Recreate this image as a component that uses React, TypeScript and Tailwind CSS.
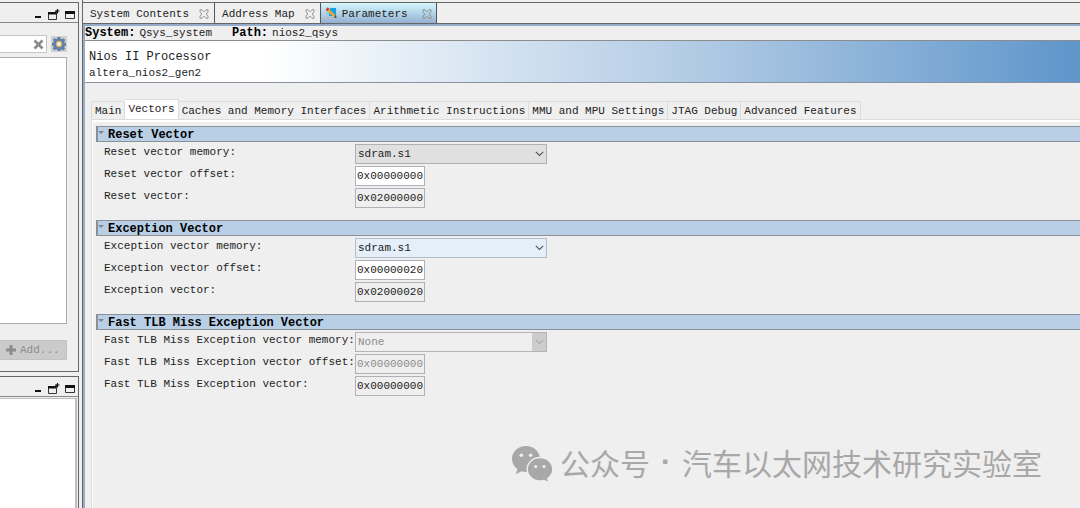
import { useState } from "react";
import type { ReactNode } from "react";
import clsx from "clsx";

type Field = {
  id: string;
  label: string;
  value: string;
  kind: "select" | "text";
  tone?: "hover" | "readonly" | "disabled";
};

const SECTIONS: { title: string; fields: Field[] }[] = [
  {
    title: "Reset Vector",
    fields: [
      { id: "reset-memory", label: "Reset vector memory:", value: "sdram.s1", kind: "select" },
      { id: "reset-offset", label: "Reset vector offset:", value: "0x00000000", kind: "text" },
      { id: "reset-vector", label: "Reset vector:", value: "0x02000000", kind: "text", tone: "readonly" },
    ],
  },
  {
    title: "Exception Vector",
    fields: [
      { id: "exc-memory", label: "Exception vector memory:", value: "sdram.s1", kind: "select", tone: "hover" },
      { id: "exc-offset", label: "Exception vector offset:", value: "0x00000020", kind: "text" },
      { id: "exc-vector", label: "Exception vector:", value: "0x02000020", kind: "text", tone: "readonly" },
    ],
  },
  {
    title: "Fast TLB Miss Exception Vector",
    fields: [
      { id: "tlb-memory", label: "Fast TLB Miss Exception vector memory:", value: "None", kind: "select", tone: "disabled" },
      { id: "tlb-offset", label: "Fast TLB Miss Exception vector offset:", value: "0x00000000", kind: "text", tone: "disabled" },
      { id: "tlb-vector", label: "Fast TLB Miss Exception vector:", value: "0x00000000", kind: "text", tone: "readonly" },
    ],
  },
];

const PARAM_TABS = [
  "Main",
  "Vectors",
  "Caches and Memory Interfaces",
  "Arithmetic Instructions",
  "MMU and MPU Settings",
  "JTAG Debug",
  "Advanced Features",
];

function CloseIcon() {
  return (
    <svg width="10" height="10" viewBox="0 0 10 10" fill="none" stroke="#8a8a8a" strokeWidth="0.9">
      <path d="M1 .8h2L5 2.800 7 .8h2v2L7.200 5 9 7.200v2H7L5 7.200 3 9.200H1v-2L2.800 5 1 2.800z" />
    </svg>
  );
}

function WindowButtons() {
  return (
    <div className="flex items-center gap-[5px] pt-1">
      <button aria-label="Minimize">
        <svg width="10" height="12" viewBox="0 0 10 12" className="block">
          <path d="M2 7h6v2H2z" fill="#111" />
        </svg>
      </button>
      <button aria-label="Detach">
        <svg width="12" height="12" viewBox="0 0 12 12" className="block">
          <path d="M.5 3.500h8v7h-8z" fill="none" stroke="#333" />
          <path d="M0 3h8v2.500H0z" fill="#111" />
          <path d="M6.500 4.500L9 2" stroke="#111" strokeWidth="1.200" />
          <path d="M7 2h4.500M9.500 0v4.500" stroke="#111" strokeWidth="1.200" />
        </svg>
      </button>
      <button aria-label="Maximize">
        <svg width="10" height="12" viewBox="0 0 10 12" className="block">
          <path d="M.5 2.500h9v7h-9z" fill="none" stroke="#333" />
          <path d="M0 2h10v3H0z" fill="#111" />
        </svg>
      </button>
    </div>
  );
}

function GearIcon() {
  return (
    <svg width="14" height="14" viewBox="0 0 14 14" className="block">
      <path
        d="M5.700 0h2.600l.4 1.800 1.300.5 1.500-1 1.800 1.800-1 1.500.5 1.300 1.200.3v2.500l-1.300.3-.5 1.300 1 1.500-1.800 1.800-1.500-1-1.300.5L8.300 14H5.700l-.4-1.300-1.300-.5-1.500 1L.7 11.500l1-1.500-.5-1.300L0 8.400V5.900l1.300-.3.5-1.300-1-1.500L2.600 1l1.500 1 1.200-.4z"
        fill="#5f80a8"
      />
      <circle cx="7" cy="7" r="2.600" fill="#f4f1ea" stroke="#dfae5c" strokeWidth="1.200" />
    </svg>
  );
}

function ParametersIcon() {
  return (
    <svg width="13" height="13" viewBox="0 0 13 13">
      <path d="M5 1h6v8H4z" fill="#16a0e8" />
      <path d="M1 4h3v4H1z" fill="#8fcdf0" />
      <path d="M1 10h10v2H1z" fill="#b4bcc4" />
      <path d="M3 3l6.500 6" stroke="#f3a823" strokeWidth="2.600" />
      <path d="M9 10.500l2.500.5-.5-3z" fill="#3e4650" />
      <path d="M.5 2.500L2.800.3l1.800 1.700L2.200 4.300z" fill="#e2382e" />
    </svg>
  );
}

function WeChatIcon() {
  return (
    <svg width="42" height="38" viewBox="0 0 42 38" fill="#a8a8a8">
      <path d="M15 1C7 1 1 6.600 1 14c0 4 2 7.500 5.300 10L5 29.200l5.600-2.900c1.400.4 2.900.7 4.500.7C23 27 29 21.200 29 14S23 1 15 1z" />
      <circle cx="10.300" cy="10.300" r="1.800" fill="#efefef" />
      <circle cx="19.700" cy="10.300" r="1.800" fill="#efefef" />
      <path
        d="M29 12.500c-7 0-12.800 5.200-12.800 11.800S22 36 29 36c1.500 0 2.900-.2 4.200-.6l4.700 2.400-1.100-4.200c3-2.200 5-5.500 5-9.300 0-6.600-5.800-11.800-12.800-11.800z"
        stroke="#efefef"
        strokeWidth="1.400"
      />
      <circle cx="24.700" cy="21.500" r="1.600" fill="#efefef" />
      <circle cx="33" cy="21.500" r="1.600" fill="#efefef" />
    </svg>
  );
}

function Sidebar() {
  return (
    <aside className="flex w-20 shrink-0 flex-col gap-1 pt-0.5">
      <section className="mr-px border-y border-r border-[#666]">
        <header className="flex h-5 items-center justify-end border-b border-[#888] pr-[3px]">
          <WindowButtons />
        </header>
        <div className="pt-3 pr-[11px] pb-[11px]">
          <div className="flex items-center gap-1">
            <div className="flex h-[18px] min-w-0 flex-1 items-center border border-l-0 border-[#c4c4cc] bg-white">
              <input aria-label="Search" className="h-3 w-full min-w-0 outline-none" />
              <button aria-label="Clear search" className="mr-0.5 shrink-0">
                <svg width="11" height="11" viewBox="0 0 11 11" className="block">
                  <path d="M1.500 1.500l8 8M9.500 1.500l-8 8" stroke="#8a8a8a" strokeWidth="2.600" />
                </svg>
              </button>
            </div>
            <button aria-label="Filter settings" className="grid size-4 place-items-center bg-[#d0d0d0]">
              <GearIcon />
            </button>
          </div>
          <div className="mt-1 h-[267px] border border-l-0 border-[#a9abb3] bg-white" />
          <button className="mt-4 flex h-5 w-full items-center gap-1 border border-l-0 border-[#c2c2c2] bg-[#cbcbcb] pl-1.5 text-[#8c8c8c]">
            <svg width="10" height="10" viewBox="0 0 10 10">
              <path d="M5 0v10M0 5h10" stroke="#8c8c8c" strokeWidth="3" />
            </svg>
            Add...
          </button>
        </div>
      </section>

      <section className="mr-px flex flex-1 flex-col border-t border-r border-[#666]">
        <header className="flex h-5 items-center justify-end border-b border-[#888] pr-[3px]">
          <WindowButtons />
        </header>
        <div className="mt-px mr-px flex-1 border-t border-r-2 border-[#bdbdc5] bg-white" />
      </section>
    </aside>
  );
}

function DocTab({ label, icon, active }: { label: string; icon?: ReactNode; active?: boolean }) {
  return (
    <div
      className={clsx(
        "flex items-center border-r border-[#555] pt-px",
        active ? "gap-1 bg-linear-to-b from-[#d3f8fb] to-[#94b1d2] px-1" : "px-[5px] pl-[7px]"
      )}
    >
      {icon}
      <button role="tab" aria-selected={!!active}>
        {label}
      </button>
      <button aria-label={`Close ${label}`} className="ml-2.5">
        <CloseIcon />
      </button>
    </div>
  );
}

function FieldRow({ field }: { field: Field }) {
  const { id, label, value, kind, tone } = field;
  const disabled = tone === "disabled";

  return (
    <div className="flex h-5 items-start">
      <label htmlFor={id} className="w-[251px] shrink-0 whitespace-nowrap">
        {label}
      </label>
      {kind === "select" ? (
        <div className="relative">
          <select
            id={id}
            disabled={disabled}
            className={clsx(
              "block h-5 w-48 appearance-none border pl-0.5 opacity-100 outline-none",
              disabled
                ? "border-[#b4b4b8] bg-[#efefef] text-[#8c8c8c]"
                : tone === "hover"
                  ? "border-[#b5bccb] bg-[#e4effa]"
                  : "border-[#b0b0b4] bg-[#e0e0e0]"
            )}
          >
            <option>{value}</option>
          </select>
          <span
            className={clsx(
              "pointer-events-none absolute inset-y-px right-px grid w-3.5 place-items-center",
              disabled && "bg-[#cccccc]"
            )}
          >
            <svg width="9" height="6" viewBox="0 0 9 6" fill="none" stroke={disabled ? "#aaa" : "#555"} strokeWidth="1.100">
              <path d="M.8.8l3.700 3.700L8.200.8" />
            </svg>
          </span>
        </div>
      ) : (
        <input
          id={id}
          defaultValue={value}
          readOnly={tone === "readonly"}
          disabled={disabled}
          className={clsx(
            "h-5 w-[70px] border border-[#b0b0b8] px-px outline-none",
            tone ? "bg-[#efefef]" : "bg-white",
            disabled && "text-[#8c8c8c]"
          )}
        />
      )}
    </div>
  );
}

function ParamSection({ title, fields }: { title: string; fields: Field[] }) {
  const [open, setOpen] = useState(true);

  return (
    <section className="mb-3">
      <button
        onClick={() => setOpen(!open)}
        aria-expanded={open}
        className="flex h-4 w-full items-end border border-r-0 border-l-2 border-[#8b9097] bg-[#b8cfe6] text-left text-xs leading-3 font-bold text-black"
      >
        <svg width="10" height="13" viewBox="0 0 10 13">
          <path d="M0 3h6L3 6z" fill="#7d858e" />
        </svg>
        {title}
      </button>
      {open && (
        <div className="flex flex-col gap-0.5 pt-0.5 pl-2">
          {fields.map((field) => (
            <FieldRow key={field.id} field={field} />
          ))}
        </div>
      )}
    </section>
  );
}

export default function App() {
  const [tab, setTab] = useState("Vectors");

  return (
    <div className="relative flex h-screen overflow-hidden bg-[#efefef] font-['Liberation_Mono','Noto_Sans_CJK_SC',monospace] text-[11px] leading-4 text-[#222]">
      <Sidebar />

      <main className="ml-0.5 flex min-w-0 flex-1 flex-col border-l border-[#666] pt-0.5">
        {/* Document tabs */}
        <div role="tablist" className="flex h-[22px] border-y border-[#666]">
          <DocTab label="System Contents" />
          <DocTab label="Address Map" />
          <DocTab label="Parameters" icon={<ParametersIcon />} active />
        </div>

        <div className="flex flex-1 flex-col border-t-2 border-l-2 border-[#94abc9]">
          <div className="flex h-[15px] items-center gap-5 border-b border-[#8c8c8c]">
            <p className="flex gap-1">
              <b className="text-xs leading-4 text-black">System:</b>
              <span>Qsys_system</span>
            </p>
            <p className="flex gap-1">
              <b className="text-xs leading-4 text-black">Path:</b>
              <span>nios2_qsys</span>
            </p>
          </div>

          <div className="h-[42px] border-b border-[#8c93a0] bg-linear-to-r from-white from-18% via-[#b0cae4] via-62% to-[#5e95ca] pt-2 pl-1">
            <h1 className="text-xs leading-4">Nios II Processor</h1>
            <p className="leading-4">altera_nios2_gen2</p>
          </div>

          <div className="flex flex-1 flex-col pt-4 pl-1.5">
            <div role="tablist" className="flex items-end">
              {PARAM_TABS.map((name) => (
                <button
                  key={name}
                  role="tab"
                  aria-selected={tab === name}
                  onClick={() => setTab(name)}
                  className={clsx(
                    "border-t border-r border-[#dcdcdc] px-[3px] whitespace-nowrap first:border-l",
                    tab === name ? "h-5 bg-white pb-0.5" : "h-[18px]"
                  )}
                >
                  {name}
                </button>
              ))}
            </div>
            <div className="flex flex-1 border-t border-l border-[#dcdcdc]">
              <div className="min-w-0 flex-1 border-t-2 border-l border-white pt-1 pl-[3px]">
                {SECTIONS.map((section) => (
                  <ParamSection key={section.title} {...section} />
                ))}
              </div>
            </div>
          </div>
        </div>
      </main>

      {/* Watermark */}
      <div className="pointer-events-none absolute right-[38px] bottom-[22px] flex items-center gap-[7px] font-['Noto_Sans_CJK_SC',sans-serif] text-[30px] leading-10 whitespace-nowrap text-[#a8a8a8]">
        <WeChatIcon />
        <p className="flex gap-1 pb-1">
          <span>公众号</span>
          <span className="w-6 text-center font-['Liberation_Sans',sans-serif] font-bold">·</span>
          <span>汽车以太网技术研究实验室</span>
        </p>
      </div>
    </div>
  );
}
